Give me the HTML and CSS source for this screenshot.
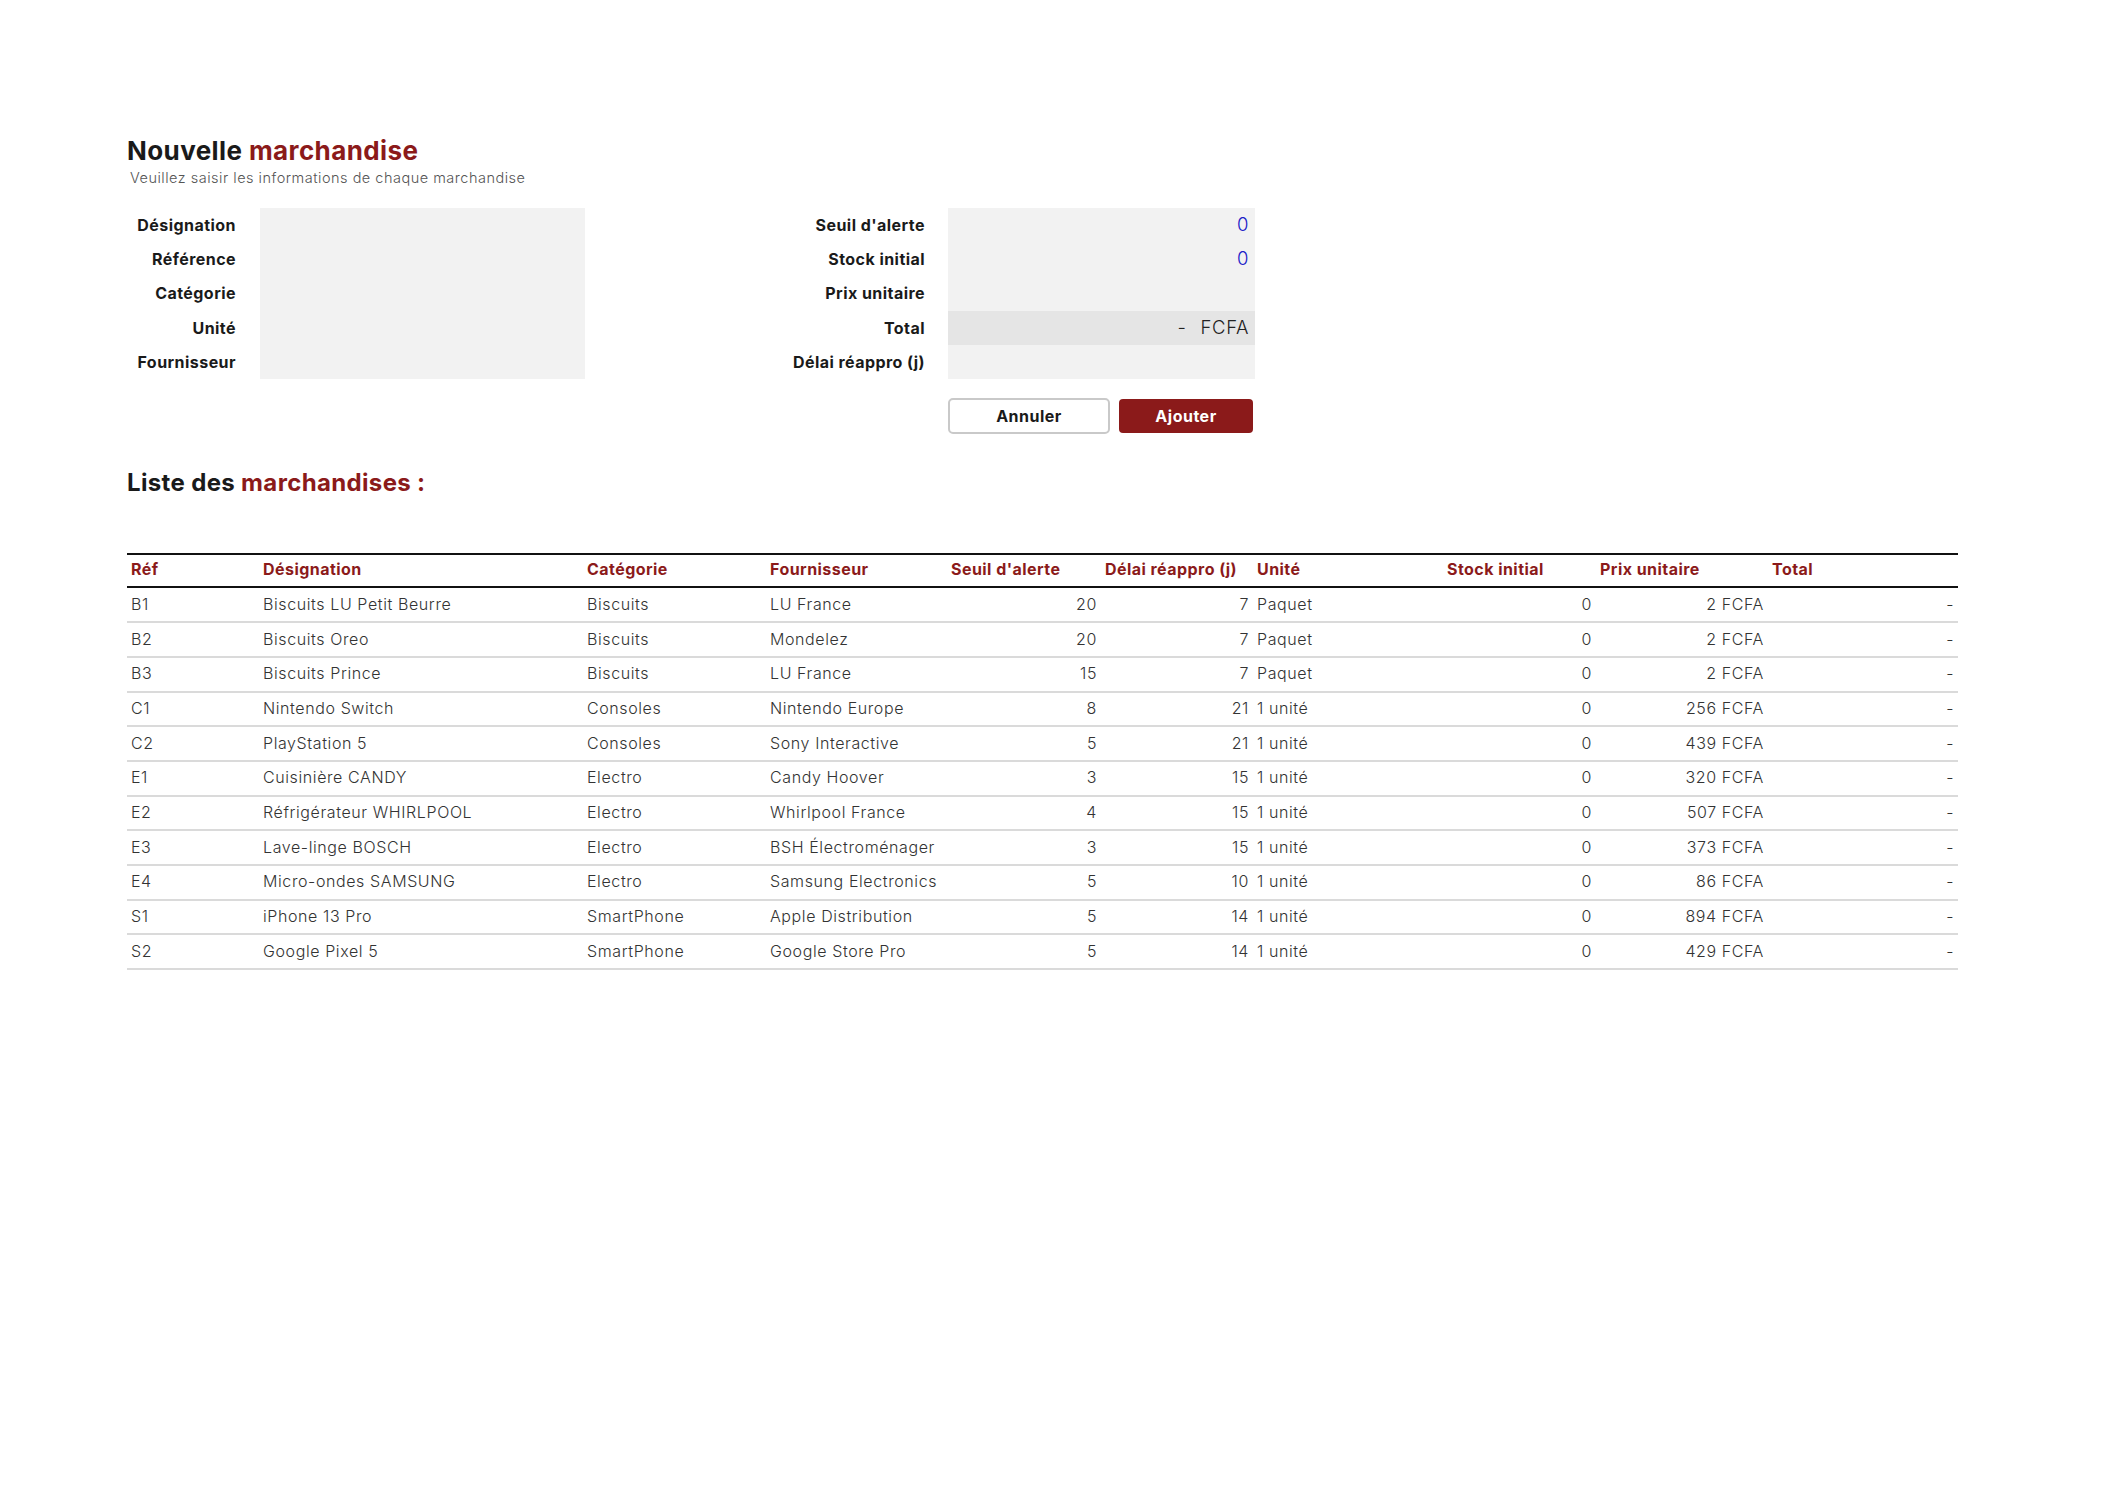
FILE: index.html
```html
<!DOCTYPE html>
<html lang="fr">
<head>
<meta charset="utf-8">
<title>Nouvelle marchandise</title>
<link rel="stylesheet" href="styles.css">
</head>
<body>
<main class="page">
  <header class="heading">
    <h1 class="title">Nouvelle <span class="accent">marchandise</span></h1>
    <p class="subtitle">Veuillez saisir les informations de chaque marchandise</p>
  </header>

  <section class="form">
    <div class="group group-left">
      <div class="labels">
        <div class="label">Désignation</div>
        <div class="label">Référence</div>
        <div class="label">Catégorie</div>
        <div class="label">Unité</div>
        <div class="label">Fournisseur</div>
      </div>
      <div class="fields">
        <div class="field"></div>
        <div class="field"></div>
        <div class="field"></div>
        <div class="field"></div>
        <div class="field"></div>
      </div>
    </div>
    <div class="right-col">
      <div class="group group-right">
        <div class="labels labels-right">
          <div class="label">Seuil d'alerte</div>
          <div class="label">Stock initial</div>
          <div class="label">Prix unitaire</div>
          <div class="label">Total</div>
          <div class="label">Délai réappro (j)</div>
        </div>
        <div class="fields fields-right">
          <div class="field num">0</div>
          <div class="field num">0</div>
          <div class="field"></div>
          <div class="field total"><span class="dash">-</span><span>FCFA</span></div>
          <div class="field"></div>
        </div>
      </div>
      <div class="actions">
        <button class="btn btn-cancel" type="button">Annuler</button>
        <button class="btn btn-add" type="button">Ajouter</button>
      </div>
    </div>
  </section>

  <h2 class="title list-title">Liste des <span class="accent">marchandises :</span></h2>

  <table class="grid">
    <thead>
      <tr>
        <th class="c-ref">Réf</th>
        <th class="c-des">Désignation</th>
        <th class="c-cat">Catégorie</th>
        <th class="c-four">Fournisseur</th>
        <th class="c-seuil">Seuil d'alerte</th>
        <th class="c-delai">Délai réappro (j)</th>
        <th class="c-unite">Unité</th>
        <th class="c-stock">Stock initial</th>
        <th class="c-prix">Prix unitaire</th>
        <th class="c-total">Total</th>
      </tr>
    </thead>
    <tbody>
      <tr><td>B1</td><td>Biscuits LU Petit Beurre</td><td>Biscuits</td><td>LU France</td><td class="r">20</td><td class="r">7</td><td>Paquet</td><td class="r">0</td><td class="r">2 FCFA</td><td class="r">-</td></tr>
      <tr><td>B2</td><td>Biscuits Oreo</td><td>Biscuits</td><td>Mondelez</td><td class="r">20</td><td class="r">7</td><td>Paquet</td><td class="r">0</td><td class="r">2 FCFA</td><td class="r">-</td></tr>
      <tr><td>B3</td><td>Biscuits Prince</td><td>Biscuits</td><td>LU France</td><td class="r">15</td><td class="r">7</td><td>Paquet</td><td class="r">0</td><td class="r">2 FCFA</td><td class="r">-</td></tr>
      <tr><td>C1</td><td>Nintendo Switch</td><td>Consoles</td><td>Nintendo Europe</td><td class="r">8</td><td class="r">21</td><td>1 unité</td><td class="r">0</td><td class="r">256 FCFA</td><td class="r">-</td></tr>
      <tr><td>C2</td><td>PlayStation 5</td><td>Consoles</td><td>Sony Interactive</td><td class="r">5</td><td class="r">21</td><td>1 unité</td><td class="r">0</td><td class="r">439 FCFA</td><td class="r">-</td></tr>
      <tr><td>E1</td><td>Cuisinière CANDY</td><td>Electro</td><td>Candy Hoover</td><td class="r">3</td><td class="r">15</td><td>1 unité</td><td class="r">0</td><td class="r">320 FCFA</td><td class="r">-</td></tr>
      <tr><td>E2</td><td>Réfrigérateur WHIRLPOOL</td><td>Electro</td><td>Whirlpool France</td><td class="r">4</td><td class="r">15</td><td>1 unité</td><td class="r">0</td><td class="r">507 FCFA</td><td class="r">-</td></tr>
      <tr><td>E3</td><td>Lave-linge BOSCH</td><td>Electro</td><td>BSH Électroménager</td><td class="r">3</td><td class="r">15</td><td>1 unité</td><td class="r">0</td><td class="r">373 FCFA</td><td class="r">-</td></tr>
      <tr><td>E4</td><td>Micro-ondes SAMSUNG</td><td>Electro</td><td>Samsung Electronics</td><td class="r">5</td><td class="r">10</td><td>1 unité</td><td class="r">0</td><td class="r">86 FCFA</td><td class="r">-</td></tr>
      <tr><td>S1</td><td>iPhone 13 Pro</td><td>SmartPhone</td><td>Apple Distribution</td><td class="r">5</td><td class="r">14</td><td>1 unité</td><td class="r">0</td><td class="r">894 FCFA</td><td class="r">-</td></tr>
      <tr><td>S2</td><td>Google Pixel 5</td><td>SmartPhone</td><td>Google Store Pro</td><td class="r">5</td><td class="r">14</td><td>1 unité</td><td class="r">0</td><td class="r">429 FCFA</td><td class="r">-</td></tr>
    </tbody>
  </table>
</main>
</body>
</html>
```

FILE: styles.css
```css
* { box-sizing: border-box; }

html, body {
  margin: 0;
  padding: 0;
  background: #ffffff;
}

body {
  font-family: "Inter", "Open Sans", "Liberation Sans", sans-serif;
  color: #1a1a1a;
}

.page {
  padding: 136px 0 0 127px;
  width: 1960px;
}

.title {
  margin: 0;
  font-size: 26px;
  line-height: 30px;
  font-weight: 700;
  color: #1a1a1a;
  letter-spacing: 0.4px;
}

.accent { color: #8b1a1a; }

.subtitle {
  margin: 3px 0 0 3px;
  font-size: 14.5px;
  line-height: 17px;
  font-weight: 300;
  color: #555555;
  letter-spacing: 0.5px;
}

.form {
  display: flex;
  align-items: flex-start;
  margin-top: 22px;
}

.group {
  display: flex;
  align-items: flex-start;
  column-gap: 24px;
}

.labels {
  display: flex;
  flex-direction: column;
  width: 109px;
}

.labels-right { width: 135px; }

.label {
  height: 34.3px;
  display: flex;
  align-items: center;
  justify-content: flex-end;
  padding-bottom: 1px;
  font-size: 16px;
  font-weight: 700;
  letter-spacing: 0.45px;
  color: #1a1a1a;
  white-space: nowrap;
}

.fields {
  display: flex;
  flex-direction: column;
  width: 325px;
  background: #f2f2f2;
}

.fields-right { width: 307px; }

.field {
  height: 34.3px;
  display: flex;
  align-items: center;
  justify-content: flex-end;
  padding-right: 6px;
  padding-bottom: 2px;
  font-size: 18.5px;
  font-weight: 300;
  letter-spacing: 0.6px;
  color: #222222;
}

.field.num { color: #2020c8; }

.field.total {
  background: #e5e5e5;
  column-gap: 14px;
}

.right-col {
  margin-left: 205px;
  display: flex;
  flex-direction: column;
}

.group-right { column-gap: 23px; }

.actions {
  display: flex;
  justify-content: flex-end;
  column-gap: 9px;
  margin-top: 19px;
  padding-left: 158px;
  padding-right: 2px;
}

.btn {
  font-family: inherit;
  font-size: 16px;
  font-weight: 700;
  letter-spacing: 0.5px;
  height: 36px;
  border-radius: 5px;
  cursor: pointer;
}

.btn-cancel {
  flex: 1;
  background: #ffffff;
  color: #1a1a1a;
  border: 2px solid #c9c9c9;
}

.btn-add {
  width: 134px;
  height: 34px;
  margin-top: 1px;
  background: #8b1a1a;
  color: #ffffff;
  border: none;
  border-radius: 4px;
}

.list-title {
  margin-top: 34px;
  font-size: 24px;
  letter-spacing: 0.35px;
}

.grid {
  margin-top: 55px;
  width: 1831px;
  border-collapse: collapse;
  table-layout: fixed;
  font-size: 16px;
}

.grid thead tr {
  border-top: 2px solid #111111;
  border-bottom: 2px solid #111111;
}

.grid th {
  height: 33px;
  padding: 0 4px 3px;
  text-align: left;
  font-weight: 700;
  letter-spacing: 0.45px;
  color: #8b1a1a;
  white-space: nowrap;
}

.grid td {
  height: 34.7px;
  padding: 0 4px 2px;
  font-weight: 300;
  letter-spacing: 0.6px;
  color: #333333;
  white-space: nowrap;
}

.grid tbody tr { border-bottom: 2px solid #dadada; }

.grid td.r { text-align: right; }

.c-ref { width: 132px; }
.c-des { width: 324px; }
.c-cat { width: 183px; }
.c-four { width: 181px; }
.c-seuil { width: 154px; }
.c-delai { width: 152px; }
.c-unite { width: 190px; }
.c-stock { width: 153px; }
.c-prix { width: 172px; }
.c-total { width: 190px; }
```
